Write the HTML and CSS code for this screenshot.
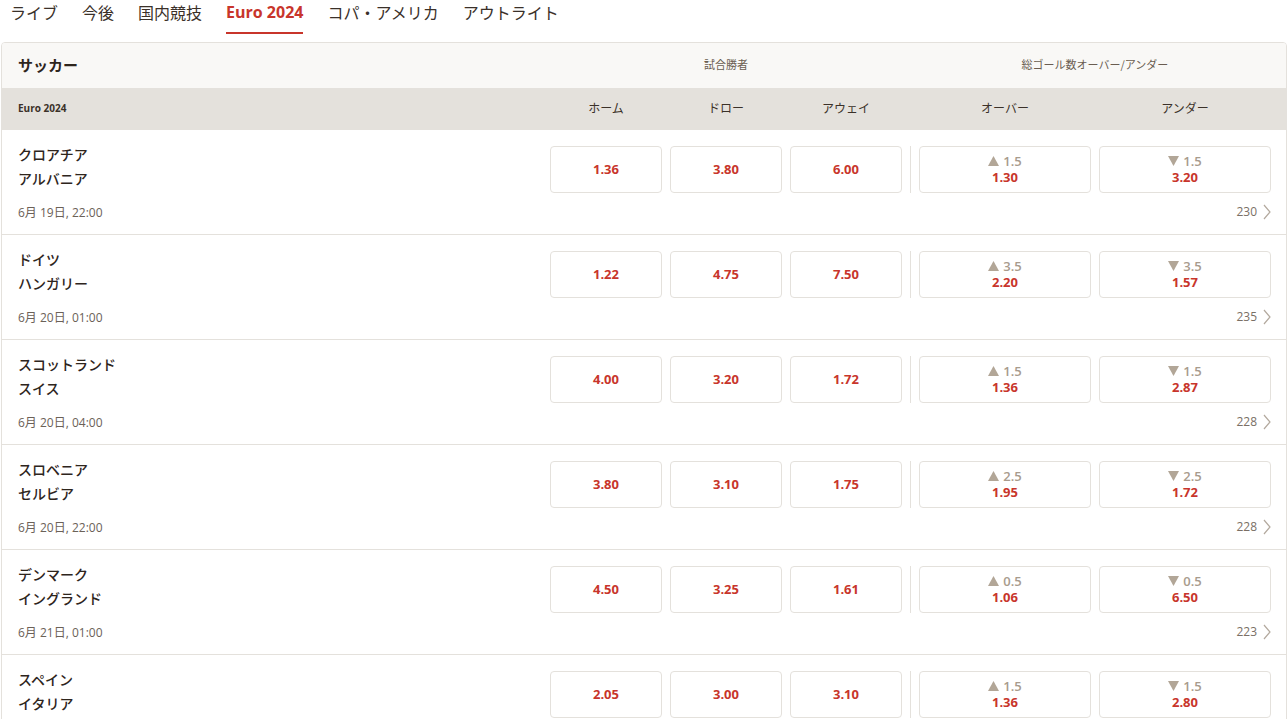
FILE: index.html
```html
<!DOCTYPE html>
<html lang="ja">
<head>
<meta charset="utf-8">
<link rel="stylesheet" href="styles.css">
</head>
<body>
<nav class="tabs">
  <a class="tab">ライブ</a>
  <a class="tab">今後</a>
  <a class="tab">国内競技</a>
  <a class="tab active">Euro 2024</a>
  <a class="tab">コパ・アメリカ</a>
  <a class="tab">アウトライト</a>
</nav>
<section class="card">
  <div class="head1 grid">
    <div class="sport">サッカー</div>
    <div class="grp grp-1x2">試合勝者</div>
    <div class="sep-space"></div>
    <div class="grp grp-ou">総ゴール数オーバー/アンダー</div>
  </div>
  <div class="head2 grid">
    <div class="league">Euro 2024</div>
    <div class="col">ホーム</div>
    <div class="col">ドロー</div>
    <div class="col">アウェイ</div>
    <div class="sep-space"></div>
    <div class="col">オーバー</div>
    <div class="col">アンダー</div>
  </div>

  <div class="match grid">
    <div class="teams"><div>クロアチア</div><div>アルバニア</div></div>
    <button class="odd">1.36</button><button class="odd">3.80</button><button class="odd">6.00</button>
    <div class="sep"></div>
    <button class="odd ou"><span class="line"><svg class="tri" width="11" height="10" viewBox="0 0 11 10"><path d="M5.5 0L11 10H0z"/></svg>1.5</span><span>1.30</span></button>
    <button class="odd ou"><span class="line"><svg class="tri" width="11" height="10" viewBox="0 0 11 10"><path d="M0 0H11L5.5 10z"/></svg>1.5</span><span>3.20</span></button>
    <div class="date">6月 19日, 22:00</div>
    <div class="more">230 <svg width="8" height="16" viewBox="0 0 8 16"><path d="M1 1l6 7-6 7" fill="none" stroke="#b3a99e" stroke-width="1.2"/></svg></div>
  </div>

  <div class="match grid">
    <div class="teams"><div>ドイツ</div><div>ハンガリー</div></div>
    <button class="odd">1.22</button><button class="odd">4.75</button><button class="odd">7.50</button>
    <div class="sep"></div>
    <button class="odd ou"><span class="line"><svg class="tri" width="11" height="10" viewBox="0 0 11 10"><path d="M5.5 0L11 10H0z"/></svg>3.5</span><span>2.20</span></button>
    <button class="odd ou"><span class="line"><svg class="tri" width="11" height="10" viewBox="0 0 11 10"><path d="M0 0H11L5.5 10z"/></svg>3.5</span><span>1.57</span></button>
    <div class="date">6月 20日, 01:00</div>
    <div class="more">235 <svg width="8" height="16" viewBox="0 0 8 16"><path d="M1 1l6 7-6 7" fill="none" stroke="#b3a99e" stroke-width="1.2"/></svg></div>
  </div>

  <div class="match grid">
    <div class="teams"><div>スコットランド</div><div>スイス</div></div>
    <button class="odd">4.00</button><button class="odd">3.20</button><button class="odd">1.72</button>
    <div class="sep"></div>
    <button class="odd ou"><span class="line"><svg class="tri" width="11" height="10" viewBox="0 0 11 10"><path d="M5.5 0L11 10H0z"/></svg>1.5</span><span>1.36</span></button>
    <button class="odd ou"><span class="line"><svg class="tri" width="11" height="10" viewBox="0 0 11 10"><path d="M0 0H11L5.5 10z"/></svg>1.5</span><span>2.87</span></button>
    <div class="date">6月 20日, 04:00</div>
    <div class="more">228 <svg width="8" height="16" viewBox="0 0 8 16"><path d="M1 1l6 7-6 7" fill="none" stroke="#b3a99e" stroke-width="1.2"/></svg></div>
  </div>

  <div class="match grid">
    <div class="teams"><div>スロベニア</div><div>セルビア</div></div>
    <button class="odd">3.80</button><button class="odd">3.10</button><button class="odd">1.75</button>
    <div class="sep"></div>
    <button class="odd ou"><span class="line"><svg class="tri" width="11" height="10" viewBox="0 0 11 10"><path d="M5.5 0L11 10H0z"/></svg>2.5</span><span>1.95</span></button>
    <button class="odd ou"><span class="line"><svg class="tri" width="11" height="10" viewBox="0 0 11 10"><path d="M0 0H11L5.5 10z"/></svg>2.5</span><span>1.72</span></button>
    <div class="date">6月 20日, 22:00</div>
    <div class="more">228 <svg width="8" height="16" viewBox="0 0 8 16"><path d="M1 1l6 7-6 7" fill="none" stroke="#b3a99e" stroke-width="1.2"/></svg></div>
  </div>

  <div class="match grid">
    <div class="teams"><div>デンマーク</div><div>イングランド</div></div>
    <button class="odd">4.50</button><button class="odd">3.25</button><button class="odd">1.61</button>
    <div class="sep"></div>
    <button class="odd ou"><span class="line"><svg class="tri" width="11" height="10" viewBox="0 0 11 10"><path d="M5.5 0L11 10H0z"/></svg>0.5</span><span>1.06</span></button>
    <button class="odd ou"><span class="line"><svg class="tri" width="11" height="10" viewBox="0 0 11 10"><path d="M0 0H11L5.5 10z"/></svg>0.5</span><span>6.50</span></button>
    <div class="date">6月 21日, 01:00</div>
    <div class="more">223 <svg width="8" height="16" viewBox="0 0 8 16"><path d="M1 1l6 7-6 7" fill="none" stroke="#b3a99e" stroke-width="1.2"/></svg></div>
  </div>

  <div class="match grid">
    <div class="teams"><div>スペイン</div><div>イタリア</div></div>
    <button class="odd">2.05</button><button class="odd">3.00</button><button class="odd">3.10</button>
    <div class="sep"></div>
    <button class="odd ou"><span class="line"><svg class="tri" width="11" height="10" viewBox="0 0 11 10"><path d="M5.5 0L11 10H0z"/></svg>1.5</span><span>1.36</span></button>
    <button class="odd ou"><span class="line"><svg class="tri" width="11" height="10" viewBox="0 0 11 10"><path d="M0 0H11L5.5 10z"/></svg>1.5</span><span>2.80</span></button>
    <div class="date">6月 21日, 04:00</div>
    <div class="more">220 <svg width="8" height="16" viewBox="0 0 8 16"><path d="M1 1l6 7-6 7" fill="none" stroke="#b3a99e" stroke-width="1.2"/></svg></div>
  </div>
</section>
</body>
</html>
```

FILE: styles.css
```css
* { box-sizing: border-box; }
html, body { margin: 0; padding: 0; background: #fff; overflow: hidden; }
body {
  font-family: "Open Sans", "Noto Sans CJK JP", sans-serif;
  color: #2e251d;
  height: 719px;
}
.tabs {
  display: flex;
  gap: 24px;
  padding-left: 10px;
  height: 34px;
}
.tab {
  font-size: 16px;
  line-height: 24px;
  color: #3a3029;
  padding-bottom: 8px;
  border-bottom: 2px solid transparent;
  height: 34px;
  font-family: "Noto Sans CJK JP", sans-serif;
}
.tab.active {
  color: #c8352b;
  font-weight: 700;
  font-family: "Open Sans", "Noto Sans CJK JP", sans-serif;
  border-bottom-color: #c8352b;
}
.card {
  margin: 8px 1px 0 1px;
  border: 1px solid #e4e1dc;
  border-radius: 4px;
  overflow: hidden;
}
.grid {
  display: grid;
  grid-template-columns: 1fr 112px 112px 112px 1px 172px 172px;
  column-gap: 8px;
  padding: 0 15px 0 16px;
}
.head1 {
  background: #f9f8f6;
  height: 45px;
  align-items: center;
}
.sport {
  font-size: 15px;
  font-weight: 700;
  font-family: "Noto Sans CJK JP", sans-serif;
  margin-top: -3px;
}
.grp {
  font-size: 11px;
  color: #6a5d51;
  text-align: center;
  font-family: "Noto Sans CJK JP", sans-serif;
  margin-top: -4px;
}
.grp-1x2 { grid-column: 2 / 5; }
.grp-ou { grid-column: 6 / 8; }
.head2 {
  background: #e4e1dc;
  height: 41px;
  align-items: center;
}
.league {
  font-size: 10px;
  font-weight: 700;
  color: #3b3129;
  margin-top: -2px;
}
.col {
  font-size: 12px;
  text-align: center;
  color: #3b3129;
  font-family: "Noto Sans CJK JP", sans-serif;
  margin-top: -2px;
}
.match {
  height: 105px;
  border-top: 1px solid #e4e1dc;
  grid-template-rows: 47px 1fr;
  padding-top: 16px;
  row-gap: 0;
}
.match:first-of-type { border-top: 0; }
.teams {
  font-family: "Noto Sans CJK JP", sans-serif;
  font-size: 14px;
  line-height: 24px;
  color: #2e251d;
  font-weight: 500;
  margin-top: -4px;
}
.odd {
  font-family: "Open Sans", sans-serif;
  background: #fff;
  border: 1px solid #e4e1dc;
  border-radius: 4px;
  color: #c8352b;
  font-size: 13px;
  font-weight: 700;
  height: 47px;
  padding: 0 0 2px 0;
  display: flex;
  flex-direction: column;
  align-items: center;
  justify-content: center;
}
.ou { line-height: 16px; }
.line {
  color: #a89b8d;
  font-weight: 600;
  display: flex;
  align-items: center;
  gap: 4px;
}
.tri { fill: #b2a697; }
.sep { background: #e4e1dc; height: 47px; }
.date {
  font-size: 12px;
  color: #6b6158;
  align-self: center;
  margin-top: -4px;
}
.more {
  grid-column: 2 / 8;
  justify-self: end;
  align-self: center;
  font-size: 12px;
  color: #7a6f65;
  display: flex;
  align-items: center;
  gap: 6px;
  margin-top: -4px;
}
```
